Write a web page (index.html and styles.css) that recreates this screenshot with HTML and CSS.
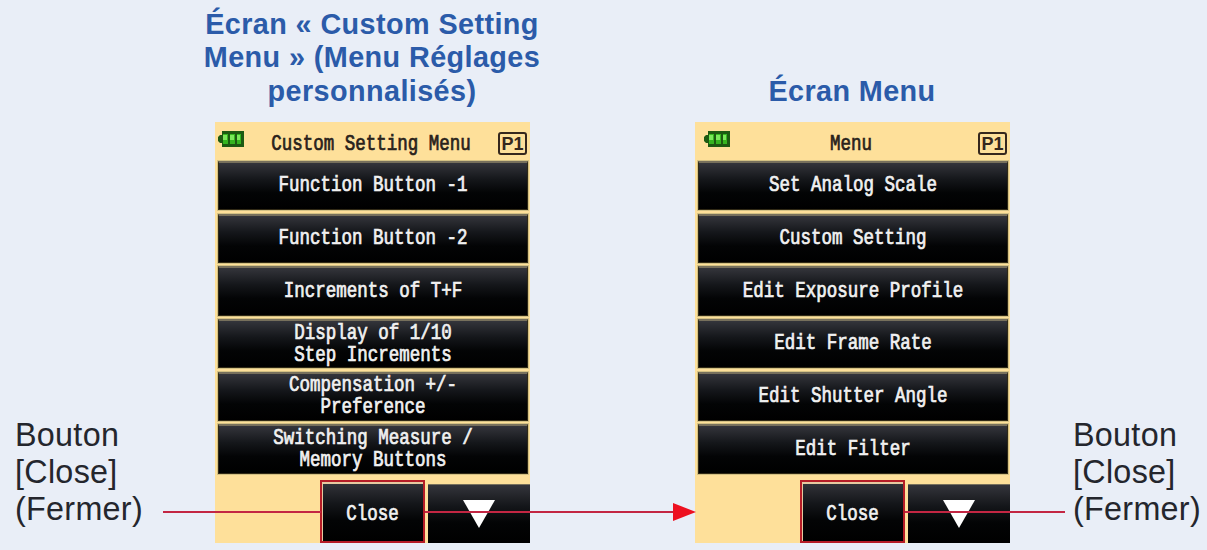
FILE: index.html
```html
<!DOCTYPE html>
<html lang="fr">
<head>
    <meta charset="UTF-8">
    <meta name="viewport" content="width=device-width, initial-scale=1.0">
    <title>Custom Setting Menu</title>
    <link rel="stylesheet" href="styles.css">
</head>
<body>
    <div class="diagram">
        <p class="label">Bouton<br>[Close]<br>(Fermer)</p>

        <section class="panel">
            <h2 class="caption">Écran « Custom Setting<br>Menu » (Menu Réglages<br>personnalisés)</h2>
            <div class="screen">
                <div class="topbar">
                    <svg class="battery" width="26" height="16" viewBox="0 0 26 16">
                        <path d="M4 0H26V16H4V12H2L0 10V6L2 4H4Z" fill="#1d5a12"/>
                        <path d="M5 3h5v10H5zM12 3h5v10h-5zM19 3h4v10h-4z" fill="#36b51f"/>
                        <path d="M5 4h4v5H5zM12 4h4v5h-4zM19 4h3v5h-3z" fill="#7be75b"/>
                    </svg>
                    <span class="title"><span class="lcd">Custom Setting Menu</span></span>
                    <span class="page">P1</span>
                </div>
                <div class="list">
                    <div class="item"><span class="lcd">Function Button -1</span></div>
                    <div class="item"><span class="lcd">Function Button -2</span></div>
                    <div class="item"><span class="lcd">Increments of T+F</span></div>
                    <div class="item"><span class="lcd">Display of 1/10<br>Step Increments</span></div>
                    <div class="item"><span class="lcd">Compensation +/-<br>Preference</span></div>
                    <div class="item"><span class="lcd">Switching Measure /<br>Memory Buttons</span></div>
                </div>
                <div class="footer">
                    <div class="close"><span class="lcd">Close</span></div>
                    <div class="down"><svg width="34" height="28" viewBox="0 0 34 28"><path d="M1 0H33L17 28Z" fill="#fff"/></svg></div>
                </div>
            </div>
        </section>

        <section class="panel">
            <h2 class="caption">Écran Menu</h2>
            <div class="screen">
                <div class="topbar shifted">
                    <svg class="battery" width="26" height="16" viewBox="0 0 26 16">
                        <path d="M4 0H26V16H4V12H2L0 10V6L2 4H4Z" fill="#1d5a12"/>
                        <path d="M5 3h5v10H5zM12 3h5v10h-5zM19 3h4v10h-4z" fill="#36b51f"/>
                        <path d="M5 4h4v5H5zM12 4h4v5h-4zM19 4h3v5h-3z" fill="#7be75b"/>
                    </svg>
                    <span class="title"><span class="lcd">Menu</span></span>
                    <span class="page">P1</span>
                </div>
                <div class="list">
                    <div class="item"><span class="lcd">Set Analog Scale</span></div>
                    <div class="item"><span class="lcd">Custom Setting</span></div>
                    <div class="item"><span class="lcd">Edit Exposure Profile</span></div>
                    <div class="item"><span class="lcd">Edit Frame Rate</span></div>
                    <div class="item"><span class="lcd">Edit Shutter Angle</span></div>
                    <div class="item"><span class="lcd">Edit Filter</span></div>
                </div>
                <div class="footer">
                    <div class="close"><span class="lcd">Close</span></div>
                    <div class="down"><svg width="34" height="28" viewBox="0 0 34 28"><path d="M1 0H33L17 28Z" fill="#fff"/></svg></div>
                </div>
            </div>
        </section>

        <p class="label">Bouton<br>[Close]<br>(Fermer)</p>

        <!-- connectors drawn over both screens -->
        <svg class="connectors" width="1207" height="550" viewBox="0 0 1207 550">
            <path d="M163 512H321M425 512H675M905 512H1065" stroke="#c32643" stroke-width="2" fill="none"/>
            <path d="M673 503L696 512L673 521Z" fill="#ed1020"/>
        </svg>
    </div>
</body>
</html>
```

FILE: styles.css
```css
body {
    margin: 0;
    background-color: #e9eef7;
    font-family: "Liberation Sans", Arial, sans-serif;
    overflow: hidden;
}
.diagram {
    position: relative;
    box-sizing: border-box;
    width: 1207px;
    height: 550px;
    padding: 0 0 7px 15px;
    display: grid;
    grid-template-columns: 187px 480px 391px 134px;
    align-items: end;
}
.label {
    margin: 0 0 15px;
    color: #24262d;
    font-size: 32.3px;
    line-height: 37px;
    letter-spacing: 0.3px;
    white-space: nowrap;
}
.panel {
    width: 340px;
    display: flex;
    flex-direction: column;
    align-items: center;
}
.caption {
    margin: 0 0 14px;
    color: #2b5ba9;
    font-size: 28.8px;
    line-height: 33.5px;
    letter-spacing: 0.4px;
    text-align: center;
    white-space: nowrap;
}
.screen {
    width: 315px;
    height: 421px;
    margin-left: 1px;
    background-color: #fee09a;
}
.topbar {
    height: 39px;
    padding: 0 3px;
    display: flex;
    align-items: center;
}
.battery {
    margin-bottom: 5px;
}
.shifted .battery {
    margin-left: 6px;
    margin-right: -6px;
}
.title {
    flex: 1;
    text-align: center;
    color: #29221b;
    margin-top: 5px;
}
.page {
    box-sizing: border-box;
    width: 29px;
    height: 23px;
    margin-top: 3px;
    border: 2px solid #35271d;
    border-radius: 3px;
    color: #35271d;
    font-size: 18px;
    font-weight: bold;
    line-height: 20px;
    text-align: center;
}
/* tall narrow lettering of the meter display */
.lcd {
    display: inline-block;
    font-family: "Liberation Mono", "Courier New", monospace;
    font-size: 17.5px;
    line-height: 17.5px;
    transform: scaleY(1.24);
    -webkit-text-stroke: 0.6px currentColor;
    white-space: nowrap;
}
.list {
    padding: 0 2px 0 3px;
    display: grid;
    grid-auto-rows: 49.2px;
    row-gap: 3.5px;
}
.item {
    display: flex;
    align-items: center;
    justify-content: center;
    box-sizing: border-box;
    border: 1px solid #302915;
    border-top: 2px solid #77705c;
    background: linear-gradient(#34353b, #15171b 35%, #030405 65%, #000);
    box-shadow: 0 0 0 1px #d3c184;
    color: #f1f1f1;
    text-align: center;
}
.footer {
    height: 63px;
    margin-top: 6px;
    display: flex;
    align-items: flex-end;
    justify-content: flex-end;
    gap: 3px;
}
.close, .down {
    box-sizing: border-box;
    display: flex;
    align-items: center;
    justify-content: center;
    background: linear-gradient(#34353b, #15171b 35%, #030405 65%, #000);
    color: #f1f1f1;
}
.close {
    width: 105px;
    height: 63px;
    border: 2px solid #b51c26;
    box-shadow: inset 0 2px 0 #e6c9a0, inset 1px 0 0 #e6c9a0;
    padding-top: 8px;
}
.down {
    width: 102px;
    height: 59px;
    border-top: 1px solid #77705c;
}
.connectors {
    position: absolute;
    top: 0;
    left: 0;
}
```
